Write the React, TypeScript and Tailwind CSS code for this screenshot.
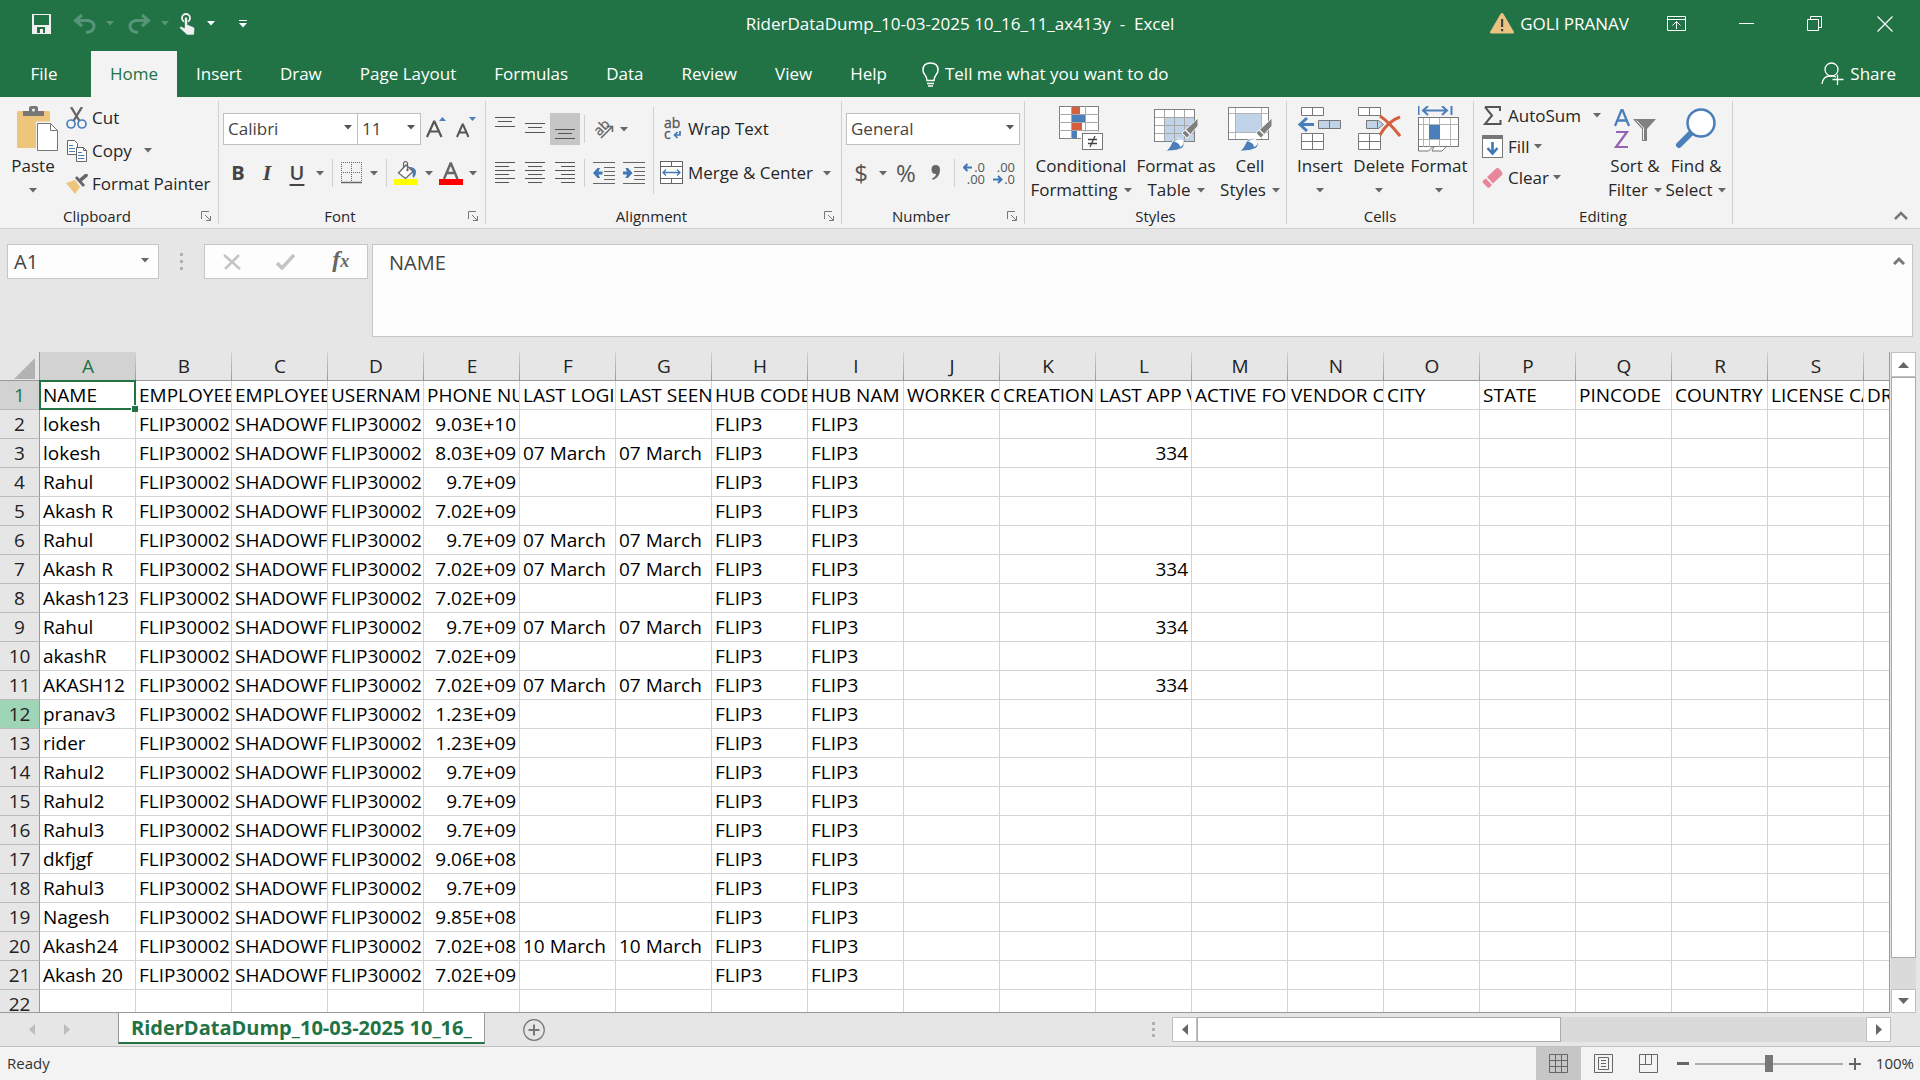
import React, { useState } from "react";
import clsx from "clsx";

interface Rider {
  name: string;
  phone: string;
  seen?: string;
  version?: string;
}

const headers = [
  "NAME", "EMPLOYEE", "EMPLOYEE", "USERNAM", "PHONE NUM", "LAST LOGI", "LAST SEEN", "HUB CODE", "HUB NAM", "WORKER C",
  "CREATION", "LAST APP V", "ACTIVE FO", "VENDOR C", "CITY", "STATE", "PINCODE", "COUNTRY", "LICENSE CA", "DRI",
];

const riders: Rider[] = [
  { name: "lokesh", phone: "9.03E+10" },
  { name: "lokesh", phone: "8.03E+09", seen: "07 March", version: "334" },
  { name: "Rahul", phone: "9.7E+09" },
  { name: "Akash R", phone: "7.02E+09" },
  { name: "Rahul", phone: "9.7E+09", seen: "07 March" },
  { name: "Akash R", phone: "7.02E+09", seen: "07 March", version: "334" },
  { name: "Akash123", phone: "7.02E+09" },
  { name: "Rahul", phone: "9.7E+09", seen: "07 March", version: "334" },
  { name: "akashR", phone: "7.02E+09" },
  { name: "AKASH12", phone: "7.02E+09", seen: "07 March", version: "334" },
  { name: "pranav3", phone: "1.23E+09" },
  { name: "rider", phone: "1.23E+09" },
  { name: "Rahul2", phone: "9.7E+09" },
  { name: "Rahul2", phone: "9.7E+09" },
  { name: "Rahul3", phone: "9.7E+09" },
  { name: "dkfjgf", phone: "9.06E+08" },
  { name: "Rahul3", phone: "9.7E+09" },
  { name: "Nagesh", phone: "9.85E+08" },
  { name: "Akash24", phone: "7.02E+08", seen: "10 March" },
  { name: "Akash 20", phone: "7.02E+09" },
];

const toRow = (r: Rider) => {
  const row: string[] = Array(20).fill("");
  row[0] = r.name;
  row[1] = "FLIP30002";
  row[2] = "SHADOWFA";
  row[3] = "FLIP30002";
  row[4] = r.phone;
  row[5] = r.seen || "";
  row[6] = r.seen || "";
  row[7] = "FLIP3";
  row[8] = "FLIP3";
  row[11] = r.version || "";
  return row;
};

const rows = [headers, ...riders.map(toRow), Array(20).fill("")];

const tabs = ["Insert", "Draw", "Page Layout", "Formulas", "Data", "Review", "View", "Help"];

/* ---------- small helpers ---------- */

const Caret = ({ className = "fill-[#666]" }: { className?: string }) => (
  <svg width="8" height="5" viewBox="0 0 8 5" className={clsx("shrink-0", className)}>
    <path d="M0 0h8L4 4.5z" />
  </svg>
);

const Sep = ({ className }: { className?: string }) => <div className={clsx("w-px shrink-0 bg-[#d0d0d0]", className)} />;

const Btn = ({ label, className, children }: { label: string; className?: string; children: React.ReactNode }) => (
  <button aria-label={label} className={clsx("flex h-8 shrink-0 items-center justify-center hover:bg-[#dadada]", className)}>
    {children}
  </button>
);

const Big = ({ icon, lines, className }: { icon: React.ReactNode; lines: string[]; className: string }) => (
  <button className={clsx("flex h-full shrink-0 flex-col items-center leading-6 whitespace-nowrap hover:bg-[#dadada]", className)}>
    <span className="flex h-[57px] items-center justify-center pt-1.5">{icon}</span>
    <span>{lines[0]}</span>
    <span className="flex h-6 items-center justify-center gap-1.5">
      {lines[1]}
      <Caret />
    </span>
  </button>
);

const Group = ({ title, launcher, className, children }: { title: string; launcher?: boolean; className: string; children: React.ReactNode }) => (
  <>
    <section className={clsx("flex shrink-0 flex-col", className)}>
      <div className="flex h-[107px] px-1">{children}</div>
      <div className="flex h-6 items-center text-[15px] leading-6">
        <span className="flex-1 text-center">{title}</span>
        {launcher && (
          <button aria-label={`${title} settings`} className="flex w-6 justify-center">
            <svg width="10" height="10" viewBox="0 0 10 10" fill="none" stroke="#777">
              <path d="M.5 8V.5H8M4 4l5 5M9.5 5v4.500H5" />
            </svg>
          </button>
        )}
      </div>
    </section>
    <Sep className="my-1" />
  </>
);

const Picker = ({ label, options, className }: { label: string; options: string[]; className: string }) => (
  <div className={clsx("relative h-8 shrink-0", className)}>
    <select aria-label={label} className="h-full w-full appearance-none border border-[#c0c0c0] bg-white px-1 text-[17px] text-[#444] outline-none">
      {options.map((o) => (
        <option key={o}>{o}</option>
      ))}
    </select>
    <span className="pointer-events-none absolute top-3 right-1.5">
      <Caret className="fill-[#555]" />
    </span>
  </div>
);

/* horizontal strokes given as [y, x1, x2] */
const Lines = ({ data, h = 32 }: { data: number[][]; h?: number }) => (
  <svg width="20" height={h} viewBox={`0 0 20 ${h}`} fill="#555">
    {data.map(([y, a, b]) => (
      <rect key={y} x={a} y={y} width={b - a} height="1" />
    ))}
  </svg>
);

const IndentIcon = ({ right }: { right?: boolean }) => (
  <svg width="22" height="22" viewBox="0 0 22 22">
    <path d="M0 .5h22M11 5.500h11M11 9.500h11M11 13.500h11M11 17.500h11M0 21.500h22" stroke="#666" />
    {right ? (
      <path d="M0 9.500h4L2.500 6H5l4.500 5L5 16H2.500L4 12.500H0z" fill="#3f78b5" />
    ) : (
      <path d="M9.500 9.500h-4L7 6H4.500L0 11l4.500 5H7l-1.500-3.500h4z" fill="#3f78b5" />
    )}
  </svg>
);

const Brush = () => (
  <g>
    <path d="M44 12v8L33 32l-5-5z" fill="#808080" stroke="#f3f3f3" strokeWidth="1" />
    <path d="M31 23.500l5 5" stroke="#f3f3f3" strokeWidth="1.500" />
    <path d="M11 45c5-2 5-6 8-10 3-3 8-3 10 0s1 7-3 8c-4 2-10 2-15 2z" fill="#4a7fb9" stroke="#f3f3f3" strokeWidth="1" />
    <path d="M20 36c3-4 8-3 9-1 1 3 0 5-3 6 0-3-3-5-6-5z" fill="#fff" />
  </g>
);

/* ---------- ribbon drawings ---------- */

const PasteIcon = () => (
  <svg width="42" height="46" viewBox="0 0 42 46">
    <rect y="5" width="33" height="37" rx="1.500" fill="#edc67c" />
    <path d="M6 10V5h6V2q0-2 2-2h5q2 0 2 2v3h6v5z" fill="#777" />
    <circle cx="16.500" cy="4" r="1.500" fill="#f3f3f3" />
    <path d="M19 15.500h16L42 23v23H19z" fill="#f3f3f3" />
    <path d="M20.500 17.500h13l7 7v20h-20z" fill="#fff" stroke="#777" />
    <path d="M33.500 17.500v7h7" fill="none" stroke="#777" />
  </svg>
);

const CutIcon = () => (
  <svg width="22" height="22" viewBox="0 0 22 22" fill="none">
    <path d="M5 0l8.500 14M16 0L7.500 14" stroke="#666" strokeWidth="2.400" />
    <circle cx="5" cy="17" r="4" stroke="#4a7fb9" strokeWidth="1.700" />
    <circle cx="16" cy="17" r="4" stroke="#4a7fb9" strokeWidth="1.700" />
  </svg>
);

const CopyIcon = () => (
  <svg width="22" height="22" viewBox="0 0 22 22" fill="#fff" stroke="#666">
    <path d="M1.500.5h7l3 3v11h-10z" />
    <path d="M3 5.500h4M3 8.500h6M3 11.500h6" stroke="#4a7fb9" />
    <path d="M10.500 7.500h7l3 3v11h-10z" />
    <path d="M17.500 7.500v3h3" fill="none" />
    <path d="M12 12.500h4M12 15.500h6.500M12 18.500h6.500" stroke="#4a7fb9" />
  </svg>
);

const PainterIcon = () => (
  <svg width="22" height="20" viewBox="0 0 22 20">
    <path d="M0 9l9-3 5 7-5 7z" fill="#edc67c" />
    <path d="M9 4l2-2 8 9-2 2z" fill="#666" />
    <path d="M13 5l6-5q2-1 3 1 0 1-1 2l-6 5z" fill="#666" />
  </svg>
);

const GrowFont = ({ down }: { down?: boolean }) => (
  <svg width="20" height="24" viewBox="0 0 20 24" fill="none" stroke="#555">
    {down ? <path d="M1 20L6.500 7.500h.5L12.500 20M3 15.500h7.500" strokeWidth="2" /> : <path d="M1 20L8 4.500h.5L15.500 20M3.500 14.500h9.500" strokeWidth="2.200" />}
    {down ? <path d="M13 0h7l-3.500 4z" fill="#4a7fb9" stroke="none" /> : <path d="M13 4h7l-3.500-4z" fill="#4a7fb9" stroke="none" />}
  </svg>
);

const BordersIcon = () => (
  <svg width="22" height="22" viewBox="0 0 22 22" fill="none" stroke="#666">
    <path d="M.5 0v20M10.500 0v20M20.500 0v20M0 .5h21M0 10.500h21" strokeDasharray="1 1" />
    <path d="M0 20.500h21" strokeWidth="1.500" />
  </svg>
);

const FillColorIcon = () => (
  <svg width="24" height="24" viewBox="0 0 24 24">
    <path d="M17 6q5 1 5 5 0 4-3 6-1-3 0-6-1-3-5-5z" fill="#4a7fb9" />
    <path d="M4.500 12L12 4l7 6.500-7.500 7z" fill="#fff" stroke="#666" strokeWidth="1.300" />
    <path d="M9.500 6.500V2q2-3 4 0v7" fill="none" stroke="#666" strokeWidth="1.200" />
    <circle cx="13.500" cy="9" r="1.200" fill="#666" />
    <rect y="18" width="24" height="6" fill="#ff0" />
  </svg>
);

const FontColorIcon = () => (
  <svg width="24" height="24" viewBox="0 0 24 24">
    <path d="M5 18L11.500 2.500h.5L18.500 18M7.500 12h9" fill="none" stroke="#666" strokeWidth="2.400" />
    <rect y="18" width="24" height="6" fill="#f00" />
  </svg>
);

const OrientationIcon = () => (
  <svg width="22" height="22" viewBox="0 0 22 22">
    <text x="-8" y="4" transform="translate(10 10) rotate(-45)" fontSize="14" fontFamily="Open Sans, sans-serif" fill="#666" stroke="#666" strokeWidth=".3">ab</text>
    <path d="M9 20L20 9M14.500 8.500H20.500V14" fill="none" stroke="#666" strokeWidth="1.500" />
  </svg>
);

const WrapIcon = () => (
  <svg width="20" height="24" viewBox="0 0 20 24">
    <text x="0" y="11" fontSize="14" fontFamily="Open Sans, sans-serif" fill="#555" stroke="#555" strokeWidth=".3">ab</text>
    <text x="0" y="22" fontSize="14" fontFamily="Open Sans, sans-serif" fill="#555" stroke="#555" strokeWidth=".3">c</text>
    <path d="M16 14v4h-5M13.500 15l-3 3 3 3" fill="none" stroke="#3f78b5" strokeWidth="1.700" />
  </svg>
);

const MergeIcon = () => (
  <svg width="24" height="24" viewBox="0 0 24 24" fill="none" stroke="#666">
    <rect x=".5" y=".5" width="22" height="22" fill="#fff" />
    <path d="M0 5.500h23M0 17.500h23M11.500 0v5M11.500 18v5" />
    <path d="M3 11.500h17M6 8.500l-3 3 3 3M17 8.500l3 3-3 3" stroke="#3f78b5" strokeWidth="1.300" />
  </svg>
);

const DecimalIcon = ({ less }: { less?: boolean }) => (
  <svg width="22" height="24" viewBox="0 0 22 24" fontSize="13" fontFamily="Open Sans, sans-serif" fill="#555" textAnchor="end">
    <text x="22" y="11">{less ? ".00" : ".0"}</text>
    <text x="22" y="23">{less ? ".0" : ".00"}</text>
    {less ? (
      <path d="M0 18.500h8M5 15l3.500 3.500L5 22" fill="none" stroke="#3f78b5" strokeWidth="2" />
    ) : (
      <path d="M9 6.500H1M4.500 3L1 6.500 4.500 10" fill="none" stroke="#3f78b5" strokeWidth="2" />
    )}
  </svg>
);

const ConditionalIcon = () => (
  <svg width="44" height="45" viewBox="0 0 44 45">
    <rect x=".5" y=".5" width="39" height="32" fill="#fff" stroke="#808080" />
    <path d="M12.500 0v33M26.500 0v33M0 8.500h40M0 16.500h40M0 24.500h40" stroke="#a8a8a8" />
    <path d="M13 1h8v7h-8zM13 17h10v7H13z" fill="#d65f3f" />
    <path d="M13 9h13v7H13zM13 25h5v7h-5z" fill="#4a7fb9" />
    <rect x="22" y="25.500" width="22" height="19.500" fill="#f3f3f3" />
    <rect x="23.500" y="27.500" width="20" height="16" fill="#fff" stroke="#777" />
    <path d="M29 33.500h9M29 37.500h9M36 30l-5 11" stroke="#444" strokeWidth="1.300" />
  </svg>
);

const FormatTableIcon = () => (
  <svg width="45" height="46" viewBox="0 0 45 46">
    <rect x=".5" y="3.500" width="40" height="32" fill="#fff" stroke="#808080" />
    <rect x="11" y="12" width="29" height="23" fill="#c0d3e8" />
    <path d="M10.500 4v31M20.500 4v31M30.500 4v31M1 11.500h39M1 19.500h39M1 27.500h39" stroke="#a8a8a8" />
    <Brush />
  </svg>
);

const CellStylesIcon = () => (
  <svg width="45" height="46" viewBox="0 0 45 46">
    <rect x=".5" y="1.500" width="40" height="32" fill="#fff" stroke="#808080" />
    <path d="M7.500 2v31M33.500 2v31M1 7.500h39M1 26.500h39" stroke="#b4b4b4" />
    <rect x="8" y="8" width="25" height="18" fill="#c0d3e8" />
    <Brush />
  </svg>
);

const InsertIcon = () => (
  <svg width="44" height="44" viewBox="0 0 44 44" fill="#fff" stroke="#777">
    <path d="M3.500.5h22v8h-22zM14.500.5v8" />
    <path d="M3.500 26.500h22v16h-22zM14.500 26.500v16M3.500 34.500h22" />
    <path d="M20.500 13.500h22v8h-22zM31.500 13.500v8" fill="#c0d3e8" />
    <path d="M16 17.500H2M9 11l-7 6.500L9 24" fill="none" stroke="#4a7fb9" strokeWidth="3" />
  </svg>
);

const DeleteIcon = () => (
  <svg width="44" height="44" viewBox="0 0 44 44" fill="#fff" stroke="#777">
    <path d="M1.500.5h22v8h-22zM12.500.5v8" />
    <path d="M1.500 26.500h22v16h-22zM12.500 26.500v16M1.500 34.500h22" />
    <path d="M9.500 13.500h12l5 4-5 4h-12zM20.500 13.500v8" fill="#c0d3e8" />
    <path d="M23 9q9 6 20 20M43 10Q31 14 23 28" fill="none" stroke="#d65f3f" strokeWidth="3" />
  </svg>
);

const FormatIcon = () => (
  <svg width="42" height="46" viewBox="0 0 42 46" fill="none">
    <path d="M.5 0v9M33.500 0v9M5 4.500h24M10 0L5 4.500 10 9M24 0l5 4.500L24 9" stroke="#4a7fb9" strokeWidth="2" />
    <rect x=".5" y="11.500" width="40" height="29" fill="#fff" stroke="#777" />
    <path d="M5.500 12v29M11.500 12v29M21.500 12v29M32.500 12v29M1 18.500h39M1 33.500h39" stroke="#b4b4b4" />
    <rect x="11" y="19" width="11" height="14" fill="#4a7fb9" />
    <path d="M.5 41v4h10l4-4M16 41l-2 4h10l4-4" fill="#fff" stroke="#777" />
  </svg>
);

const SortIcon = () => (
  <svg width="42" height="40" viewBox="0 0 42 40" fill="none">
    <path d="M1 17L7.500 1h1L15 17M3.500 11.500h9" stroke="#4a7fb9" strokeWidth="2.300" />
    <path d="M2 23h11L2 38h12" stroke="#9562b5" strokeWidth="2.200" />
    <path d="M19 10h23l-9 10v12h-5V20z" fill="#808080" />
    <path d="M22.500 11.500l7 7.500v12" stroke="#f3f3f3" />
  </svg>
);

const FindIcon = () => (
  <svg width="42" height="42" viewBox="0 0 42 42">
    <path d="M17 24L4 37" stroke="#4a7fb9" strokeWidth="6" strokeLinecap="round" />
    <circle cx="26" cy="15" r="13.500" fill="#fff" stroke="#4a7fb9" strokeWidth="2.500" />
  </svg>
);

const SumIcon = () => (
  <svg width="22" height="20" viewBox="0 0 22 20">
    <path d="M3 1h15v4M3 1l7 8.500L3 18h15.500v-4" fill="none" stroke="#555" strokeWidth="2" />
  </svg>
);

const FillDownIcon = () => (
  <svg width="22" height="24" viewBox="0 0 22 24">
    <rect x=".5" y=".5" width="20" height="22" fill="#fff" stroke="#777" />
    <rect width="21" height="4" fill="#777" />
    <path d="M10.500 7v11M5.500 13l5 5.500 5-5.500" fill="none" stroke="#3f78b5" strokeWidth="2.600" />
  </svg>
);

const EraserIcon = () => (
  <svg width="22" height="22" viewBox="0 0 22 22" fill="#e8869a">
    <path d="M5 10L14 1.500q1.500-1 3 0l3 3.500q1 1.500 0 3L11 16.500z" />
    <path d="M4 11.500l6 6.500-2.500 2.500q-1 .5-2 0L.8 15.500q-.5-1 .2-2z" />
  </svg>
);

/* ---------- page sections ---------- */

const TitleBar = () => (
  <header className="flex h-[51px] items-center justify-between pb-1 text-[17px] text-white">
    <div className="flex flex-1 items-center">
      <button aria-label="Save" className="ml-8">
        <svg width="19" height="20" viewBox="0 0 19 20">
          <path d="M0 0h19v20H0z" fill="#f0f0f0" />
          <path d="M2 1h15v10H2zM5 13h8v6h-2v-4H8v4H5z" fill="#217346" />
        </svg>
      </button>
      <button aria-label="Undo" className="ml-[22px]">
        <svg width="23" height="20" viewBox="0 0 23 20" fill="none" stroke="#57967a" strokeWidth="3">
          <path d="M9 1L2.500 6.500 9 12M3 6.500h12q6 1 6 6t-8 6" />
        </svg>
      </button>
      <button aria-label="Undo list" className="ml-2.5">
        <Caret className="fill-[#57967a]" />
      </button>
      <button aria-label="Redo" className="ml-3.5">
        <svg width="23" height="20" viewBox="0 0 23 20" fill="none" stroke="#57967a" strokeWidth="3">
          <path d="M14 1l6.500 5.500L14 12M20 6.500H8q-6 1-6 6t8 6" />
        </svg>
      </button>
      <button aria-label="Redo list" className="ml-2.5">
        <Caret className="fill-[#57967a]" />
      </button>
      <button aria-label="Touch mode" className="ml-2.5">
        <svg width="16" height="22" viewBox="0 0 16 22">
          <circle cx="7" cy="5" r="4" fill="none" stroke="#f0f0f0" strokeWidth="1.800" />
          <path d="M5.500 5q1.500-2 3 0v6.500l6 2.500q1.500 1 1.200 3l-.7 5H8l-7.500-7q0-2 2-1.500l3 1.500z" fill="#f0f0f0" stroke="#217346" strokeWidth=".6" />
        </svg>
      </button>
      <button aria-label="Touch mode list" className="ml-3">
        <Caret className="fill-white" />
      </button>
      <button aria-label="Customize toolbar" className="ml-6">
        <svg width="8" height="8" viewBox="0 0 8 8" fill="#fff">
          <path d="M0 0h8v1H0zM0 3h8L4 7.500z" />
        </svg>
      </button>
    </div>
    <h1 className="whitespace-pre">RiderDataDump_10-03-2025 10_16_11_ax413y  -  Excel</h1>
    <div className="flex flex-1 items-center justify-end">
      <button className="mr-[13px] flex items-center gap-1.5">
        <svg width="24" height="21" viewBox="0 0 24 21">
          <path d="M12 0q1 0 1.500 1L24 19q0 1.500-1 1.500H1Q0 20.500 0 19L10.500 1Q11 0 12 0z" fill="#eac282" />
          <path d="M11 6h2.200v8H11zM11 16h2.200v2.200H11z" fill="#444" />
        </svg>
        GOLI PRANAV
      </button>
      <button aria-label="Ribbon display options" className="flex w-[70px] justify-center">
        <svg width="20" height="16" viewBox="0 0 20 16" fill="none" stroke="#fff">
          <path d="M.5.500h18v14H.5zM.5 3.500h18M9.500 13V5.500M5.500 9.500l4-4 4 4" />
        </svg>
      </button>
      <button aria-label="Minimize" className="flex w-[68px] justify-center">
        <span className="h-px w-[15px] bg-white" />
      </button>
      <button aria-label="Restore" className="flex w-[70px] justify-center">
        <svg width="16" height="16" viewBox="0 0 16 16" fill="none" stroke="#fff">
          <path d="M.5 3.500h11v11H.5zM3.500 3V.5h11v11H12" />
        </svg>
      </button>
      <button aria-label="Close" className="flex w-[70px] justify-center">
        <svg width="16" height="16" viewBox="0 0 16 16" stroke="#fff" strokeWidth="1.200">
          <path d="M.5.500l15 15M15.500.500l-15 15" />
        </svg>
      </button>
    </div>
  </header>
);

const TabStrip = () => (
  <nav className="flex h-[46px] items-stretch text-[17px] whitespace-nowrap text-white">
    <button className="w-[91px] pr-[3px]">File</button>
    <button className="bg-[#f3f3f3] px-[19px] text-[#217346]">Home</button>
    {tabs.map((t) => (
      <button key={t} className="px-[19px] hover:bg-[#439467]">
        {t}
      </button>
    ))}
    <button className="flex items-center gap-1.5 px-4">
      <svg width="17" height="25" viewBox="0 0 17 25" fill="none" stroke="#fff" strokeWidth="1.500">
        <path d="M5 18.500q0-3-2-5.500Q1 11 1 8q0-7 7.500-7T16 8q0 3-2 5-2 2.500-2 5.500zM5 21.500h7M6 24h5" />
      </svg>
      Tell me what you want to do
    </button>
    <button className="ml-auto flex items-center gap-1.5 pr-6">
      <svg width="23" height="24" viewBox="0 0 23 24" fill="none" stroke="#fff" strokeWidth="1.300">
        <circle cx="10.500" cy="7.500" r="6.500" />
        <path d="M1 22q1-8 8-8h3l3 1M16.500 12.500V23M11.500 17.500H22.500" />
      </svg>
      Share
    </button>
  </nav>
);

const Ribbon = () => (
  <div className="flex border-b border-[#d2d2d2] bg-[#f3f3f3] text-[17px] text-[#262626]">
    <Group title="Clipboard" launcher className="w-[218px]">
      <button className="flex w-[58px] flex-col items-center leading-6">
        <span className="flex h-[57px] items-center pt-1.5 pl-2.5">
          <PasteIcon />
        </span>
        Paste
        <span className="flex h-6 items-center">
          <Caret />
        </span>
      </button>
      <div className="flex flex-col pt-1 pl-1">
        <button className="flex h-[33px] items-center gap-1">
          <CutIcon />
          Cut
        </button>
        <button className="flex h-[33px] items-center gap-1">
          <CopyIcon />
          Copy
          <span className="pl-2">
            <Caret />
          </span>
        </button>
        <button className="flex h-[33px] items-center gap-1 whitespace-nowrap">
          <PainterIcon />
          Format Painter
        </button>
      </div>
    </Group>

    <Group title="Font" launcher className="w-[266px]">
      <div className="flex flex-col gap-3 pt-4">
        <div className="flex">
          <Picker label="Font" options={["Calibri"]} className="w-[135px]" />
          <Picker label="Font size" options={["11"]} className="-ml-px w-16" />
          <Btn label="Increase font size" className="w-[30px]"><GrowFont /></Btn>
          <Btn label="Decrease font size" className="w-[30px]"><GrowFont down /></Btn>
        </div>
        <div className="flex items-center text-xl text-[#444]">
          <Btn label="Bold" className="w-[30px] font-bold">B</Btn>
          <Btn label="Italic" className="w-7 font-['Liberation_Serif',serif] text-[22px] font-bold italic">I</Btn>
          <Btn label="Underline" className="w-8 font-semibold underline underline-offset-4">U</Btn>
          <Btn label="Underline styles" className="w-3.5"><Caret /></Btn>
          <Sep className="mx-[5px] h-7" />
          <Btn label="Borders" className="w-7"><BordersIcon /></Btn>
          <Btn label="Border styles" className="w-4"><Caret /></Btn>
          <Sep className="mx-1 h-7" />
          <Btn label="Fill color" className="w-[30px]"><FillColorIcon /></Btn>
          <Btn label="Fill colors" className="w-4"><Caret /></Btn>
          <Btn label="Font color" className="w-7"><FontColorIcon /></Btn>
          <Btn label="Font colors" className="w-4"><Caret /></Btn>
        </div>
      </div>
    </Group>

    <Group title="Alignment" launcher className="w-[355px]">
      <div className="flex flex-col gap-3 pt-4">
        <div className="flex items-center">
          <Btn label="Top align" className="w-[30px]"><Lines data={[[4, 0, 20], [8, 3, 17], [13, 0, 20]]} /></Btn>
          <Btn label="Middle align" className="w-[30px]"><Lines data={[[10, 0, 20], [14, 3, 17], [19, 0, 20]]} /></Btn>
          <Btn label="Bottom align" className="w-[30px] bg-[#c6c6c6]"><Lines data={[[16, 0, 20], [20, 3, 17], [25, 0, 20]]} /></Btn>
          <Sep className="mx-1 h-7" />
          <Btn label="Orientation" className="w-[42px] gap-1.5"><OrientationIcon /><Caret /></Btn>
        </div>
        <div className="flex items-center">
          <Btn label="Align left" className="w-[30px]"><Lines h={22} data={[[0, 0, 20], [4, 0, 14], [8, 0, 20], [12, 0, 14], [16, 0, 20], [20, 0, 14]]} /></Btn>
          <Btn label="Center" className="w-[30px]"><Lines h={22} data={[[0, 0, 20], [4, 3, 17], [8, 0, 20], [12, 3, 17], [16, 0, 20], [20, 3, 17]]} /></Btn>
          <Btn label="Align right" className="w-[30px]"><Lines h={22} data={[[0, 0, 20], [4, 6, 20], [8, 0, 20], [12, 6, 20], [16, 0, 20], [20, 6, 20]]} /></Btn>
          <Sep className="mx-1 h-7" />
          <Btn label="Decrease indent" className="w-[30px]"><IndentIcon /></Btn>
          <Btn label="Increase indent" className="w-[30px]"><IndentIcon right /></Btn>
        </div>
      </div>
      <Sep className="mx-1 mt-2.5 h-[87px]" />
      <div className="flex flex-col items-start gap-3 pt-4 pl-0.5 whitespace-nowrap">
        <Btn label="Wrap Text" className="gap-1 pl-1"><WrapIcon />Wrap Text</Btn>
        <Btn label="Merge & Center" className="gap-1">
          <MergeIcon />
          Merge &amp; Center
          <span className="pl-1.5"><Caret /></span>
        </Btn>
      </div>
    </Group>

    <Group title="Number" launcher className="w-[182px]">
      <div className="flex flex-col gap-3 pt-4">
        <Picker label="Number format" options={["General"]} className="w-[174px]" />
        <div className="flex items-center text-2xl text-[#555]">
          <Btn label="Accounting format" className="w-[30px]">$</Btn>
          <Btn label="Currencies" className="w-3.5"><Caret /></Btn>
          <Btn label="Percent style" className="w-8">%</Btn>
          <Btn label="Comma style" className="w-7">
            <svg width="10" height="16" viewBox="0 0 10 16" fill="#666">
              <path d="M4.500 0Q9 0 9 5q0 7-7 10l-1-1.500q4-2 4-4.500Q.5 9 .5 4.500.5 0 4.500 0z" />
            </svg>
          </Btn>
          <Sep className="mx-1 h-7" />
          <Btn label="Increase decimal" className="w-[30px]"><DecimalIcon /></Btn>
          <Btn label="Decrease decimal" className="w-[30px]"><DecimalIcon less /></Btn>
        </div>
      </div>
    </Group>

    <Group title="Styles" className="w-[261px]">
      <Big className="w-[104px]" icon={<ConditionalIcon />} lines={["Conditional", "Formatting"]} />
      <Big className="w-[86px]" icon={<FormatTableIcon />} lines={["Format as", "Table"]} />
      <Big className="w-[62px]" icon={<CellStylesIcon />} lines={["Cell", "Styles"]} />
    </Group>

    <Group title="Cells" className="w-[186px]">
      <Big className="w-[58px]" icon={<InsertIcon />} lines={["Insert"]} />
      <Big className="w-[60px]" icon={<DeleteIcon />} lines={["Delete"]} />
      <Big className="w-[60px]" icon={<FormatIcon />} lines={["Format"]} />
    </Group>

    <Group title="Editing" className="w-[258px]">
      <div className="flex w-[126px] flex-col pt-[3px] pl-1">
        <button className="flex h-[31px] items-center gap-1">
          <SumIcon />
          AutoSum
          <span className="pl-2">
            <Caret />
          </span>
        </button>
        <button className="flex h-[31px] items-center gap-1">
          <FillDownIcon />
          Fill
          <Caret />
        </button>
        <button className="flex h-[31px] items-center gap-1">
          <EraserIcon />
          Clear
          <Caret />
        </button>
      </div>
      <Big className="w-[62px]" icon={<SortIcon />} lines={["Sort &", "Filter"]} />
      <Big className="w-[60px]" icon={<FindIcon />} lines={["Find &", "Select"]} />
    </Group>

    <button aria-label="Collapse ribbon" className="mt-auto ml-auto pr-3 pb-2">
      <svg width="14" height="9" viewBox="0 0 14 9" fill="none" stroke="#777" strokeWidth="2.500">
        <path d="M1 8l6-6 6 6" />
      </svg>
    </button>
  </div>
);

const FormulaBar = () => {
  const [cell, setCell] = useState("A1");
  const [formula, setFormula] = useState("NAME");
  return (
    <div className="flex items-start px-[7px] py-[15px] text-xl text-[#444]">
      <div className="relative h-[35px] w-[152px]">
        <input
          aria-label="Name box"
          value={cell}
          onChange={(e) => setCell(e.target.value)}
          className="h-full w-full border border-[#c6c6c6] bg-[#fdfdfd] px-1.5 outline-none"
        />
        <span className="pointer-events-none absolute top-3.5 right-2.5 flex h-2 items-start">
          <Caret />
        </span>
      </div>
      <div className="flex h-[35px] w-[45px] flex-col items-center justify-center gap-1">
        <span className="h-[3px] w-[3px] bg-[#b0b0b0]" />
        <span className="h-[3px] w-[3px] bg-[#b0b0b0]" />
        <span className="h-[3px] w-[3px] bg-[#b0b0b0]" />
      </div>
      <div className="mr-1 flex h-[35px] w-[164px] items-center justify-around border border-[#c6c6c6] bg-[#fdfdfd]">
        <button aria-label="Cancel">
          <svg width="18" height="16" viewBox="0 0 18 16" stroke="#c4c4c4" strokeWidth="2.500">
            <path d="M1 1l16 14M16 1L2 15" />
          </svg>
        </button>
        <button aria-label="Enter">
          <svg width="20" height="16" viewBox="0 0 20 16" fill="none" stroke="#c4c4c4" strokeWidth="3.500">
            <path d="M1 9l5 5L18 1" />
          </svg>
        </button>
        <button aria-label="Insert function" className="pb-1 font-['Liberation_Serif',serif] text-2xl leading-7 font-bold text-[#666] italic">
          f<span className="text-lg">x</span>
        </button>
      </div>
      <div className="relative h-[93px] flex-1">
        <textarea
          aria-label="Formula bar"
          value={formula}
          onChange={(e) => setFormula(e.target.value)}
          className="block h-full w-full resize-none border border-[#c6c6c6] bg-[#fdfdfd] px-4 py-1 leading-7 outline-none"
        />
        <button aria-label="Collapse formula bar" className="absolute top-3 right-2 flex h-3 items-start">
          <svg width="12" height="9" viewBox="0 0 12 9" fill="none" stroke="#777" strokeWidth="3">
            <path d="M1 8l5-5 5 5" />
          </svg>
        </button>
      </div>
    </div>
  );
};

const Sheet = () => (
  <div className="min-w-0 flex-1 overflow-hidden border-r border-b border-[#999] bg-white text-[19px] leading-7 text-black">
    <table className="border-separate border-spacing-0">
      <thead>
        <tr className="h-[29px]">
          <th className="w-10 min-w-10 border-r border-b border-[#999] bg-[#e6e6e6] p-0">
            <svg width="22" height="21" viewBox="0 0 22 21" className="mt-1 mr-[3px] ml-auto">
              <path d="M21 0v21H0z" fill="#b2b2b2" />
            </svg>
          </th>
          {headers.map((_, i) => (
            <th
              key={i}
              scope="col"
              className={clsx(
                "w-24 max-w-24 min-w-24 border-b border-[#999] bg-[linear-gradient(to_bottom,#d4d4d4,#999)] bg-[length:1px_100%] bg-right bg-no-repeat p-0 font-normal",
                i === 0 ? "bg-[#d2d2d2] text-[#217346]" : "bg-[#e6e6e6] text-[#222]"
              )}
            >
              {i < 19 && String.fromCharCode(65 + i)}
            </th>
          ))}
        </tr>
      </thead>
      <tbody>
        {rows.map((row, r) => (
          <tr key={r} className="h-[29px]">
            <th
              scope="row"
              className={clsx(
                "border-r border-b border-r-[#999] border-b-[#bbb] p-0 font-normal",
                r === 0 ? "bg-[#d2d2d2] text-[#217346]" : r === 11 ? "bg-[#9fd5b7] text-[#222]" : "bg-[#e6e6e6] text-[#222]"
              )}
            >
              {r + 1}
            </th>
            {row.map((value, c) => (
              <td
                key={c}
                className={clsx(
                  "w-24 max-w-24 min-w-24 border-r border-b border-[#d4d4d4] px-[3px] py-0 whitespace-nowrap",
                  r > 0 && (c === 4 || c === 11) && "text-right",
                  r === 0 && c === 0 ? "relative" : "overflow-hidden"
                )}
              >
                {value}
                {/* selection frame with its fill handle */}
                {r === 0 && c === 0 && (
                  <span className="pointer-events-none absolute -inset-px border-2 border-[#217346]">
                    <span className="absolute -right-1 -bottom-1 h-[7px] w-[7px] border-t border-l border-white bg-[#217346]" />
                  </span>
                )}
              </td>
            ))}
          </tr>
        ))}
      </tbody>
    </table>
  </div>
);

const VerticalScroll = () => (
  <div className="mr-1 ml-px flex w-[25px] flex-col bg-[#dadada]">
    <button aria-label="Scroll up" className="flex h-[25px] items-center justify-center border border-[#c0c0c0] bg-white">
      <svg width="11" height="6" viewBox="0 0 11 6" fill="#666"><path d="M0 6h11L5.500 0z" /></svg>
    </button>
    <div className="flex-[582] border border-[#ababab] bg-white" />
    <div className="flex-[31]" />
    <button aria-label="Scroll down" className="flex h-6 items-center justify-center border border-[#c0c0c0] bg-white">
      <svg width="11" height="6" viewBox="0 0 11 6" fill="#666"><path d="M0 0h11L5.500 6z" /></svg>
    </button>
  </div>
);

const SheetTabs = () => (
  <div className="flex h-[34px] items-start border-b border-[#c0c0c0]">
    <div className="flex h-8 w-[118px] items-center gap-[29px] pl-[29px]">
      <button aria-label="Previous sheet">
        <svg width="6" height="11" viewBox="0 0 6 11" fill="#bcbcbc"><path d="M6 0v11L0 5.500z" /></svg>
      </button>
      <button aria-label="Next sheet">
        <svg width="6" height="11" viewBox="0 0 6 11" fill="#bcbcbc"><path d="M0 0v11l6-5.500z" /></svg>
      </button>
    </div>
    <button className="h-[31px] border-x border-b-2 border-x-[#999] border-b-[#217346] bg-white px-3 text-xl leading-7 font-bold whitespace-nowrap text-[#217346]">
      RiderDataDump_10-03-2025 10_16_
    </button>
    <button aria-label="New sheet" className="mt-1.5 ml-[38px]">
      <svg width="22" height="22" viewBox="0 0 22 22" fill="none" stroke="#777">
        <circle cx="11" cy="11" r="10.300" strokeWidth="1.200" />
        <path d="M11 5.500v11M5.500 11h11" strokeWidth="2" />
      </svg>
    </button>
    <div className="ml-auto flex h-[33px] w-2/5 items-center pr-[29px]">
      <div className="mr-[17px] flex flex-col gap-[3px]">
        <span className="h-[3px] w-[3px] bg-[#b0b0b0]" />
        <span className="h-[3px] w-[3px] bg-[#b0b0b0]" />
        <span className="h-[3px] w-[3px] bg-[#b0b0b0]" />
      </div>
      <div className="flex h-[25px] flex-1 bg-[#dadada]">
        <button aria-label="Scroll left" className="flex w-[25px] items-center justify-center border border-[#c0c0c0] bg-white">
          <svg width="6" height="11" viewBox="0 0 6 11" fill="#666"><path d="M6 0v11L0 5.500z" /></svg>
        </button>
        <div className="flex-[365] border border-[#ababab] bg-white" />
        <div className="flex-[308]" />
        <button aria-label="Scroll right" className="flex w-[25px] items-center justify-center border border-[#c0c0c0] bg-white">
          <svg width="6" height="11" viewBox="0 0 6 11" fill="#666"><path d="M0 0v11l6-5.500z" /></svg>
        </button>
      </div>
    </div>
  </div>
);

const StatusBar = () => {
  const [zoom, setZoom] = useState(100);
  return (
    <footer className="flex h-[33px] items-center bg-[#f3f3f3] pr-1.5 pl-[7px] text-[15px] text-[#333]">
      <span>Ready</span>
      <button aria-label="Normal view" className="ml-auto flex h-full w-[45px] items-center justify-center bg-[#c6c6c6]">
        <svg width="20" height="19" viewBox="0 0 20 19" fill="none" stroke="#666">
          <path d="M.5.500h18v18H.5zM6.500 0v19M12.500 0v19M0 6.500h19M0 12.500h19" />
        </svg>
      </button>
      <button aria-label="Page layout view" className="flex h-full w-[45px] items-center justify-center">
        <svg width="20" height="19" viewBox="0 0 20 19" fill="none" stroke="#666">
          <path d="M.5.500h18v18H.5zM4.500 3.500h10v12h-10zM7 6.500h5M7 9.500h5M7 12.500h5" />
        </svg>
      </button>
      <button aria-label="Page break preview" className="flex h-full w-[45px] items-center justify-center">
        <svg width="20" height="19" viewBox="0 0 20 19" fill="none" stroke="#666">
          <path d="M.5.500h18v18H.5zM.5 10.500h12M12.500 0v10.500M6.500 0v10.500" />
        </svg>
      </button>
      <button aria-label="Zoom out" className="ml-1.5 flex h-3 w-3 items-center">
        <span className="h-[3px] w-3 bg-[#666]" />
      </button>
      <input
        type="range"
        aria-label="Zoom"
        min={0}
        max={200}
        value={zoom}
        onChange={(e) => setZoom(Number(e.target.value))}
        className="mx-1.5 h-0.5 w-[148px] appearance-none bg-[#ababab] [&::-webkit-slider-thumb]:h-[17px] [&::-webkit-slider-thumb]:w-2 [&::-webkit-slider-thumb]:appearance-none [&::-webkit-slider-thumb]:rounded-none [&::-webkit-slider-thumb]:bg-[#777]"
      />
      <button aria-label="Zoom in">
        <svg width="12" height="12" viewBox="0 0 12 12" stroke="#666" strokeWidth="2">
          <path d="M6 0v12M0 6h12" />
        </svg>
      </button>
      <span className="w-[53px] text-right">{zoom}%</span>
    </footer>
  );
};

export default function App() {
  return (
    <main className="flex h-screen flex-col overflow-hidden bg-[#e6e6e6] font-['Open_Sans',sans-serif]">
      <div className="bg-[#217346]">
        <TitleBar />
        <TabStrip />
      </div>
      <Ribbon />
      <FormulaBar />
      <div className="flex min-h-0 flex-1">
        <Sheet />
        <VerticalScroll />
      </div>
      <SheetTabs />
      <StatusBar />
    </main>
  );
}
